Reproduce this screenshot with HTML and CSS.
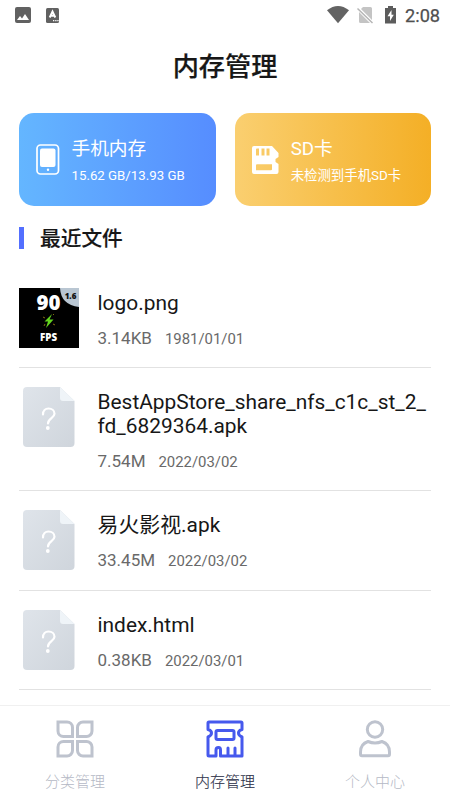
FILE: index.html
```html
<!DOCTYPE html>
<html lang="zh-CN">
<head>
<meta charset="utf-8">
<title>内存管理</title>
<link rel="stylesheet" href="styles.css">
</head>
<body>
<svg class="defs" width="0" height="0" aria-hidden="true">
  <defs>
    <linearGradient id="paper" x1="0" y1="0" x2="1" y2="1"><stop offset="0" stop-color="#dfe4ea"/><stop offset="1" stop-color="#cfd5dc"/></linearGradient>
    <symbol id="file" viewBox="0 0 60 60">
      <path d="M8 0H41L55.500 14V56a4 4 0 0 1-4 4H8a4 4 0 0 1-4-4V4a4 4 0 0 1 4-4Z" fill="url(#paper)"/>
      <path d="M41 0L55.500 14H44a3 3 0 0 1-3-3Z" fill="#eff4f8"/>
      <path d="M24 27.500C24 23.500 26.500 21.500 29.500 21.500C33 21.500 35.500 23.800 35.500 26.800C35.500 31 29 31.500 29 36.500" fill="none" stroke="#fff" stroke-width="2.200" stroke-linecap="round"/>
      <circle cx="28.800" cy="41" r="1.900" fill="#fff"/>
    </symbol>
  </defs>
</svg>
<header class="status">
  <svg width="60" height="32" viewBox="0 0 60 32">
    <rect x="15" y="7" width="16" height="16" rx="2" fill="#616161"/>
    <path d="M17 20l3-4 2 2.500 3-4.500 4 6Z" fill="#fff"/>
    <rect x="46" y="8" width="13" height="15" rx="1.500" fill="#616161"/>
    <path d="M49.700 17.500L52.500 11.500L55.300 17.500M50.500 15.700H54.500" fill="none" stroke="#fff" stroke-width="1.900"/>
    <path d="M53 20.700h1.300M55.200 20.700h1.300M57.300 20.700h1.300" stroke="#fff" stroke-width="1.300"/>
  </svg>
  <svg class="signals" width="75" height="32" viewBox="325 0 75 32">
    <path d="M327 10.300Q338 1.800 349 10.300L338 23.200Z" fill="#636363"/>
    <path d="M363 7H370.500a1.500 1.500 0 0 1 1.500 1.500V20L361 9ZM359 12L370 23H360.500a1.500 1.500 0 0 1-1.500-1.500Z" fill="#c4c4c4"/>
    <path d="M357.500 8.500L372.500 23" stroke="#b5b5b5" stroke-width="1.500"/>
    <path d="M385 8h3V6h5v2h3v15.500h-11Z" fill="#5c5c5c"/>
    <path d="M391.500 10L387.500 16.300H390V21L393.800 14.700H391.500Z" fill="#fff"/>
  </svg>
  <span class="clock">2:08</span>
</header>
<h1 class="title">内存管理</h1>
<section class="cards">
  <article class="card phone">
    <svg class="card-icon" width="24" height="32" viewBox="0 0 24 32">
      <rect x="1" y="1" width="21.500" height="29" rx="3.500" fill="none" stroke="#fff" stroke-width="1.700"/>
      <rect x="4" y="4.500" width="15.500" height="18.500" rx="2" fill="#fff"/><circle cx="12" cy="25.700" r="1.200" fill="#fff"/>
    </svg>
    <div><h2>手机内存</h2><p>15.62 GB/13.93 GB</p></div>
  </article>
  <article class="card sd">
    <svg class="card-icon" width="27" height="29" viewBox="0 0 27 29">
      <path fill="#fff" fill-rule="evenodd" d="M2 0H20L26.500 7V11L23.500 13V16L26.500 18V26a2 2 0 0 1-2 2H2a2 2 0 0 1-2-2V2a2 2 0 0 1 2-2ZM5 2.500a1 1 0 0 0-1 1V9.500h3V2.500ZM9.500 2.500V9.500h3V2.500ZM14.500 2.500V9.500h3V2.500ZM5 18.300a1 1 0 0 0-1 1V24.200H19a1 1 0 0 0 1-1V18.300Z"/>
    </svg>
    <div><h2>SD卡</h2><p>未检测到手机SD卡</p></div>
  </article>
</section>
<h2 class="section">最近文件</h2>
<main class="files">
  <article class="row">
    <svg class="thumb" width="60" height="60" viewBox="0 0 60 60">
      <rect width="60" height="60" fill="#000"/>
      <path d="M41 0H60V19Q42 17 41 0Z" fill="#b9c6d2"/>
      <text class="art fps-number" x="29.500" y="21.500" textLength="24" lengthAdjust="spacingAndGlyphs">90</text>
      <text class="art version" x="51.500" y="11.300">1.6</text>
      <path d="M33 26L25.500 33.500H29L27 40L34.500 31.500H30.500Z" fill="#64d51e"/>
      <path d="M24 29l2 1M34 36l2 1M34 27l1-1M25 38l1-2" stroke="#856b12"/>
      <text class="art fps" x="29.500" y="53" textLength="17" lengthAdjust="spacingAndGlyphs">FPS</text>
    </svg>
    <div class="info"><h3>logo.png</h3><p><span class="size">3.14KB</span><time>1981/01/01</time></p></div>
  </article>
  <article class="row">
    <svg class="thumb" width="60" height="60"><use href="#file"/></svg>
    <div class="info"><h3>BestAppStore_share_nfs_c1c_st_2_<br>fd_6829364.apk</h3><p><span class="size">7.54M</span><time>2022/03/02</time></p></div>
  </article>
  <article class="row">
    <svg class="thumb" width="60" height="60"><use href="#file"/></svg>
    <div class="info"><h3>易火影视.apk</h3><p><span class="size">33.45M</span><time>2022/03/02</time></p></div>
  </article>
  <article class="row">
    <svg class="thumb" width="60" height="60"><use href="#file"/></svg>
    <div class="info"><h3>index.html</h3><p><span class="size">0.38KB</span><time>2022/03/01</time></p></div>
  </article>
</main>
<nav class="tabs">
  <a class="tab">
    <svg width="38" height="38" viewBox="0 0 38 38" fill="none" stroke="#bec3ce" stroke-width="3">
      <path d="M2 2H11a5.500 5.500 0 0 1 5.500 5.500V16.500H7.500A5.500 5.500 0 0 1 2 11Z"/>
      <path d="M36 2H27a5.500 5.500 0 0 0-5.500 5.500V16.500H30.500A5.500 5.500 0 0 0 36 11Z"/>
      <path d="M2 36H11a5.500 5.500 0 0 0 5.500-5.500V21.500H7.500A5.500 5.500 0 0 0 2 27Z"/>
      <path d="M36 36H27a5.500 5.500 0 0 1-5.500-5.500V21.500H30.500A5.500 5.500 0 0 1 36 27Z"/>
    </svg>
    <span>分类管理</span>
  </a>
  <a class="tab active">
    <svg width="38" height="38" viewBox="0 0 38 38" fill="none" stroke="#4659ed" stroke-width="3" stroke-linejoin="round" stroke-linecap="round">
      <path d="M3 2H35Q36 2 36 3V9.500Q32.500 10.500 32.500 13Q32.500 15.500 36 17V36H14.500V30Q14.500 27.500 12.500 27.500Q10 27.500 10 30V36H3Q2 36 2 35V17Q5.500 15.500 5.500 13Q5.500 10.500 2 9.500V3Q2 2 3 2Z"/>
      <rect x="10" y="10.500" width="18" height="9" rx="1.500"/><path d="M22 28V35M29 28V35"/>
    </svg>
    <span>内存管理</span>
  </a>
  <a class="tab">
    <svg width="38" height="38" viewBox="0 0 38 38" fill="none" stroke="#bec3ce" stroke-width="3" stroke-linejoin="round">
      <circle cx="19" cy="9.500" r="7.700"/>
      <path d="M12 21.500Q19 24.500 26 21.500Q33.500 24 33.500 32V34Q33.500 35.700 32 35.700H6Q4.500 35.700 4.500 34V32Q4.500 24 12 21.500Z"/>
    </svg>
    <span>个人中心</span>
  </a>
</nav>
</body>
</html>
```
FILE: styles.css
```css
* { box-sizing: border-box; }
body {
  margin: 0;
  height: 800px;
  display: flex;
  flex-direction: column;
  overflow: hidden;
  background: #fff;
  color: #171717;
  font-family: Roboto, "Noto Sans CJK SC", sans-serif;
}
h1, h2, h3, p { margin: 0; font-weight: 400; }
svg { display: block; flex: none; }
.defs { position: absolute; }
.status { display: flex; height: 32px; flex: none; }
.signals { margin-left: 265px; }
.clock { margin-left: 5px; font-size: 18.2px; line-height: 32px; color: #505050; -webkit-text-stroke: 0.25px #505050; }
.title { height: 68px; flex: none; text-align: center; font-size: 26.2px; line-height: 70px; font-weight: 500; -webkit-text-stroke: 0.2px #171717; }
.cards { display: grid; grid-template-columns: 1fr 1fr; gap: 19px; padding: 0 19px; margin-top: 13px; flex: none; }
.card { display: flex; height: 93px; border-radius: 15px; color: #fff; padding: 22px 0 0 17px; }
.phone { background: linear-gradient(90deg, #64b6ff, #568dff); }
.sd { background: linear-gradient(90deg, #facf70, #f4af26); }
.card-icon { margin: 9px 11.5px 0 0; }
.sd .card-icon { margin: 11px 12.2px 0 0; }
.card h2 { font-size: 18.7px; line-height: 28px; }
.card p { font-size: 13.25px; line-height: 20px; margin-top: 3px; white-space: nowrap; }
.sd p { font-size: 13.4px; }
.section { margin: 21px 19px 0; height: 22px; flex: none; border-left: 5px solid #536fff; padding-left: 16px; font-size: 20.7px; line-height: 24px; font-weight: 500; -webkit-text-stroke: 0.15px #171717; }
.files { margin: 20px 19px 0; }
.row { display: flex; min-height: 99.3px; padding-top: 19px; border-bottom: 1px solid #e2e2e2; }
.thumb { margin-right: 18.5px; }
.info { padding-top: 3px; flex: 1; min-width: 0; }
.info h3 { font-size: 20.9px; line-height: 24px; white-space: nowrap; }
.info p { display: flex; align-items: baseline; gap: 13px; height: 20px; margin: 12px 0 20px; line-height: 22px; color: #696969; }
.size { font-size: 17px; }
time { font-size: 14.9px; }
.art { fill: #fff; font-family: "Open Sans", sans-serif; font-weight: 800; text-anchor: middle; }
.fps-number { font-size: 21px; }
.fps { font-size: 11px; }
.version { font-size: 8px; fill: #111; }
.tabs { display: grid; grid-template-columns: repeat(3, 1fr); height: 95px; flex: none; margin-top: auto; border-top: 1px solid #f0f0f0; background: #fff; }
.tab { display: flex; flex-direction: column; align-items: center; padding-top: 14px; font-size: 15px; line-height: 22px; color: #b5b9c5; font-weight: 300; }
.tab span { margin-top: 13px; }
.active { color: #30344b; -webkit-text-stroke: 0.15px #30344b; }
```
